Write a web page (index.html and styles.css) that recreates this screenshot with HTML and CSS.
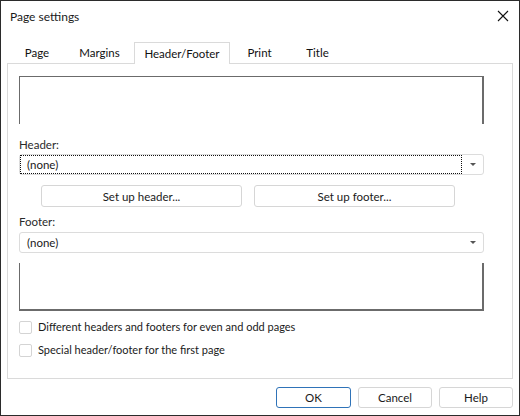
FILE: index.html
```html
<!DOCTYPE html>
<html>
<head>
<meta charset="utf-8">
<link rel="stylesheet" href="styles.css">
</head>
<body>
<div class="window">
  <div class="titlebar">
    <span class="title">Page settings</span>
    <svg class="close" width="12" height="12" viewBox="0 0 12 12"><path d="M1 1L11 11M11 1L1 11" stroke="#111" stroke-width="1.1" fill="none"/></svg>
  </div>
  <div class="tabs">
    <div class="tab t-page">Page</div>
    <div class="tab t-margins">Margins</div>
    <div class="tab t-hf active">Header/Footer</div>
    <div class="tab t-print">Print</div>
    <div class="tab t-title">Title</div>
  </div>
  <div class="panel">
    <div class="preview preview-top"></div>
    <div class="label label-header">Header:</div>
    <div class="combo">
      <div class="combo-value focused">(none)</div>
      <div class="combo-arrow"><span class="tri"></span></div>
    </div>
    <div class="setup-row">
      <div class="btn setup">Set up header...</div>
      <div class="btn setup">Set up footer...</div>
    </div>
    <div class="label label-footer">Footer:</div>
    <div class="combo combo-footer">
      <div class="combo-value">(none)</div>
      <div class="combo-arrow"><span class="tri"></span></div>
    </div>
    <div class="preview preview-bottom"></div>
    <div class="check-row first"><span class="box"></span><span>Different headers and footers for even and odd pages</span></div>
    <div class="check-row"><span class="box"></span><span>Special header/footer for the first page</span></div>
  </div>
  <div class="actions">
    <div class="btn action default">OK</div>
    <div class="btn action">Cancel</div>
    <div class="btn action">Help</div>
  </div>
</div>
</body>
</html>
```
FILE: styles.css
```css
html, body {
  margin: 0;
  padding: 0;
  background: #fff;
}
body {
  font-family: "Lato", "Noto Sans", sans-serif;
  font-size: 11.5px;
  color: #1a1a1a;
}
.window {
  width: 520px;
  height: 416px;
  box-sizing: border-box;
  border: 1px solid #2b2b2b;
  background: #fff;
  overflow: hidden;
}
.titlebar {
  height: 30px;
  display: flex;
  align-items: center;
  justify-content: space-between;
  padding: 0 10px 0 9px;
}
.title {
  font-size: 12px;
  line-height: 16px;
  margin-top: 1px;
}
.close {
  display: block;
  margin-top: -1px;
}
.tabs {
  display: flex;
  margin: 11px 0 -1px 8px;
  height: 22px;
}
.tab {
  box-sizing: border-box;
  height: 22px;
  display: flex;
  align-items: center;
  justify-content: center;
  padding-bottom: 1px;
  color: #111;
}
.t-page { width: 56px; }
.t-margins { width: 69px; }
.t-hf { width: 96px; }
.t-print { width: 59px; }
.t-title { width: 57px; }
.tab.active {
  border: 1px solid #dadada;
  border-bottom: none;
  background: #fff;
  position: relative;
  z-index: 1;
  padding-top: 1px;
}
.panel {
  margin: 0 6px;
  height: 316px;
  box-sizing: border-box;
  border: 1px solid #dadada;
  padding: 12px 28px 0 11px;
  display: flex;
  flex-direction: column;
}
.preview {
  height: 48px;
  box-sizing: border-box;
  border-left: 1px solid #6b6b6b;
  border-right: 2px solid #6b6b6b;
}
.preview-top {
  border-top: 1px solid #6b6b6b;
}
.preview-bottom {
  margin-top: 10px;
  border-bottom: 2px solid #6b6b6b;
}
.label {
  height: 16px;
  line-height: 16px;
  color: #2a2a2a;
}
.label-header { margin-top: 13px; }
.label-footer { margin-top: 7px; }
.combo {
  margin-top: 1px;
  height: 21px;
  box-sizing: border-box;
  border: 1px solid #dcdcdc;
  border-radius: 3px;
  display: flex;
  padding: 0;
}
.combo-footer {
  margin-top: 2px;
}
.combo-value {
  flex: 1;
  box-sizing: border-box;
  border: 1px solid transparent;
  padding-left: 6px;
  line-height: 17px;
  color: #1a1a1a;
}
.combo-value.focused {
  border: 1px dotted #111;
}
.combo-arrow {
  width: 21px;
  display: flex;
  align-items: center;
  justify-content: center;
}
.tri {
  width: 0;
  height: 0;
  border-left: 3px solid transparent;
  border-right: 3px solid transparent;
  border-top: 3px solid #555;
  margin-left: 1px;
}
.setup-row {
  display: flex;
  gap: 12px;
  margin-top: 10px;
  padding-left: 22px;
}
.btn {
  box-sizing: border-box;
  border: 1px solid #d6d6d6;
  border-radius: 3px;
  display: flex;
  align-items: center;
  justify-content: center;
  background: #fff;
  color: #1a1a1a;
}
.btn.setup {
  width: 201px;
  height: 22px;
}
.check-row {
  display: flex;
  align-items: center;
  height: 16px;
  line-height: 16px;
  margin-top: 7px;
}
.check-row.first {
  margin-top: 8px;
}
.check-row span:last-child {
  font-size: 11px;
}
.box {
  width: 13px;
  height: 13px;
  box-sizing: border-box;
  border: 1px solid #d4d4d4;
  border-radius: 2px;
  margin-right: 6px;
}
.actions {
  display: flex;
  justify-content: flex-end;
  gap: 7px;
  margin: 8px 6px 0 0;
}
.btn.action {
  width: 74px;
  height: 21px;
}
.btn.default {
  width: 75px;
  border-color: #2f73b8;
}
```
